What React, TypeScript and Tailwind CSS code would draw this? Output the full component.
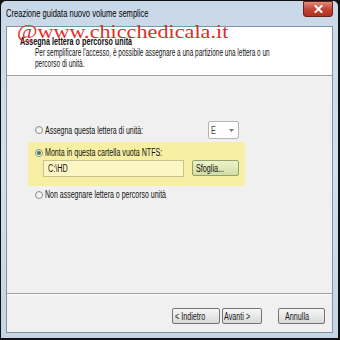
import type { ReactNode } from "react";
import clsx from "clsx";

const ui = { fontFamily: '"Liberation Sans", Arial, sans-serif' };

// Narrow text: the screenshot is squeezed horizontally, so the glyphs are too
function T({ children, className }: { children: ReactNode; className?: string }) {
  return (
    <span className={clsx("inline-block whitespace-nowrap origin-left", className ?? "scale-x-[0.72]")}>
      {children}
    </span>
  );
}

function Radio({ checked = false }: { checked?: boolean }) {
  return (
    <span className="ml-[1px] flex h-[8px] w-[8px] shrink-0 items-center justify-center rounded-full border border-[#8c8c8c] bg-gradient-to-br from-[#e6e6e6] to-[#ffffff]">
      {checked && <span className="h-[4px] w-[4px] rounded-full bg-[#3f7f36]" />}
    </span>
  );
}

function WinButton({ label, width }: { label: string; width: string }) {
  return (
    <div
      className={clsx(
        "flex h-[16px] items-center justify-center rounded-[2px] border border-[#747474] bg-gradient-to-b from-[#f6f6f6] via-[#e8e8e8] to-[#d8d8d8] text-[10px] leading-[11px] text-[#1a1a1a]",
        width
      )}
    >
      <T className="scale-x-[0.72] origin-center">{label}</T>
    </div>
  );
}

export default function App() {
  return (
    <div className="relative h-[340px] w-[340px] overflow-hidden bg-[#111] pt-px pr-[2px] pb-[2px] pl-px" style={ui}>
      <div className="flex h-full flex-col rounded-t-[5px] bg-gradient-to-b from-[#c9d8e8] via-[#d3dfeb] to-[#c6d4e3]">
        {/* title bar */}
        <div className="flex h-[25px] items-start">
          <div className="flex h-[25px] items-center pl-[5px] text-[10.5px] leading-[11px] text-black">
            <T>Creazione guidata nuovo volume semplice</T>
          </div>
          <div className="mt-0 mr-[5px] ml-auto flex h-[16px] w-[30px] items-center justify-center rounded-b-[3px] border border-[#6b2119] bg-gradient-to-b from-[#e08a7c] via-[#c54433] to-[#b1301f]">
            <svg width="9" height="8" viewBox="0 0 9 8">
              <path d="M1.5 1 L7.5 7 M7.5 1 L1.5 7" stroke="#fff" strokeWidth="2" strokeLinecap="square" />
            </svg>
          </div>
        </div>

        {/* content */}
        <div className="mx-[5px] mb-[5px] flex flex-1 flex-col border border-[#7f94aa] bg-[#f0f0f0]">
          <div className="h-[49px] border-b border-[#a0a0a0] bg-white pt-[9px] pl-[13px] text-[10px] leading-[11px] text-[#111]">
            <div className="font-bold">
              <T>Assegna lettera o percorso unità</T>
            </div>
            <div className="pl-[15px]">
              <div>
                <T className="scale-x-[0.645]">Per semplificare l'accesso, è possibile assegnare a una partizione una lettera o un</T>
              </div>
              <div>
                <T className="scale-x-[0.645]">percorso di unità.</T>
              </div>
            </div>
          </div>

          <div className="flex-1 pt-[45px] pl-[21px] text-[10px] leading-[11px] text-[#111]">
            <div className="flex w-[217px] flex-col">
              <div className="flex h-[18px] items-center px-[6px]">
                <Radio />
                <T className="ml-[2px] scale-x-[0.7]">Assegna questa lettera di unità:</T>
                <div className="ml-auto flex h-[18px] w-[31px] items-center justify-between rounded-[2px] border border-[#b4b4b4] bg-white pr-[4px] pl-[2px] text-[#444]">
                  <T>E</T>
                  <svg width="5" height="3" viewBox="0 0 5 3">
                    <path d="M0 0 H5 L2.5 3 Z" fill="#777" />
                  </svg>
                </div>
              </div>

              <div className="mt-[3px] flex flex-col bg-[#f7f0a4] pt-[5px] pr-[6px] pb-[9px] pl-[6px]">
                <div className="flex items-center">
                  <Radio checked />
                  <T className="ml-[2px] scale-x-[0.71]">Monta in questa cartella vuota NTFS:</T>
                </div>
                <div className="mt-[1px] flex h-[18px] items-center pl-[9px]">
                  <div className="flex h-[17px] w-[141px] items-center border border-[#c9c191] bg-[#fbf6c4] pl-[4px]">
                    <T>C:\HD</T>
                  </div>
                  <div className="ml-auto flex h-[16px] w-[47px] items-center justify-center rounded-[2px] border border-[#8fa56a] bg-gradient-to-b from-[#eef2cc] to-[#d3dca4]">
                    <T className="scale-x-[0.72] origin-center">Sfoglia...</T>
                  </div>
                </div>
              </div>

              <div className="mt-[3px] flex items-center px-[6px]">
                <Radio />
                <T className="ml-[2px] scale-x-[0.7]">Non assegnare lettera o percorso unità</T>
              </div>
            </div>
          </div>

          <div className="flex h-[39px] justify-end border-t border-[#a0a0a0] pt-[14px] pr-[7px] shadow-[inset_0_1px_0_#fff]">
            <WinButton label="< Indietro" width="w-[48px]" />
            <div className="ml-[2px]">
              <WinButton label="Avanti >" width="w-[40px]" />
            </div>
            <div className="ml-[16px]">
              <WinButton label="Annulla" width="w-[47px]" />
            </div>
          </div>
        </div>
      </div>

      {/* watermark */}
      <div
        className="absolute top-[23px] left-[17px] origin-left scale-x-[1.2] text-[18.5px] leading-none whitespace-nowrap text-[#e32b2b]"
        style={{ fontFamily: '"Liberation Serif", "Times New Roman", serif' }}
      >
        @www.chicchedicala.it
      </div>
    </div>
  );
}
